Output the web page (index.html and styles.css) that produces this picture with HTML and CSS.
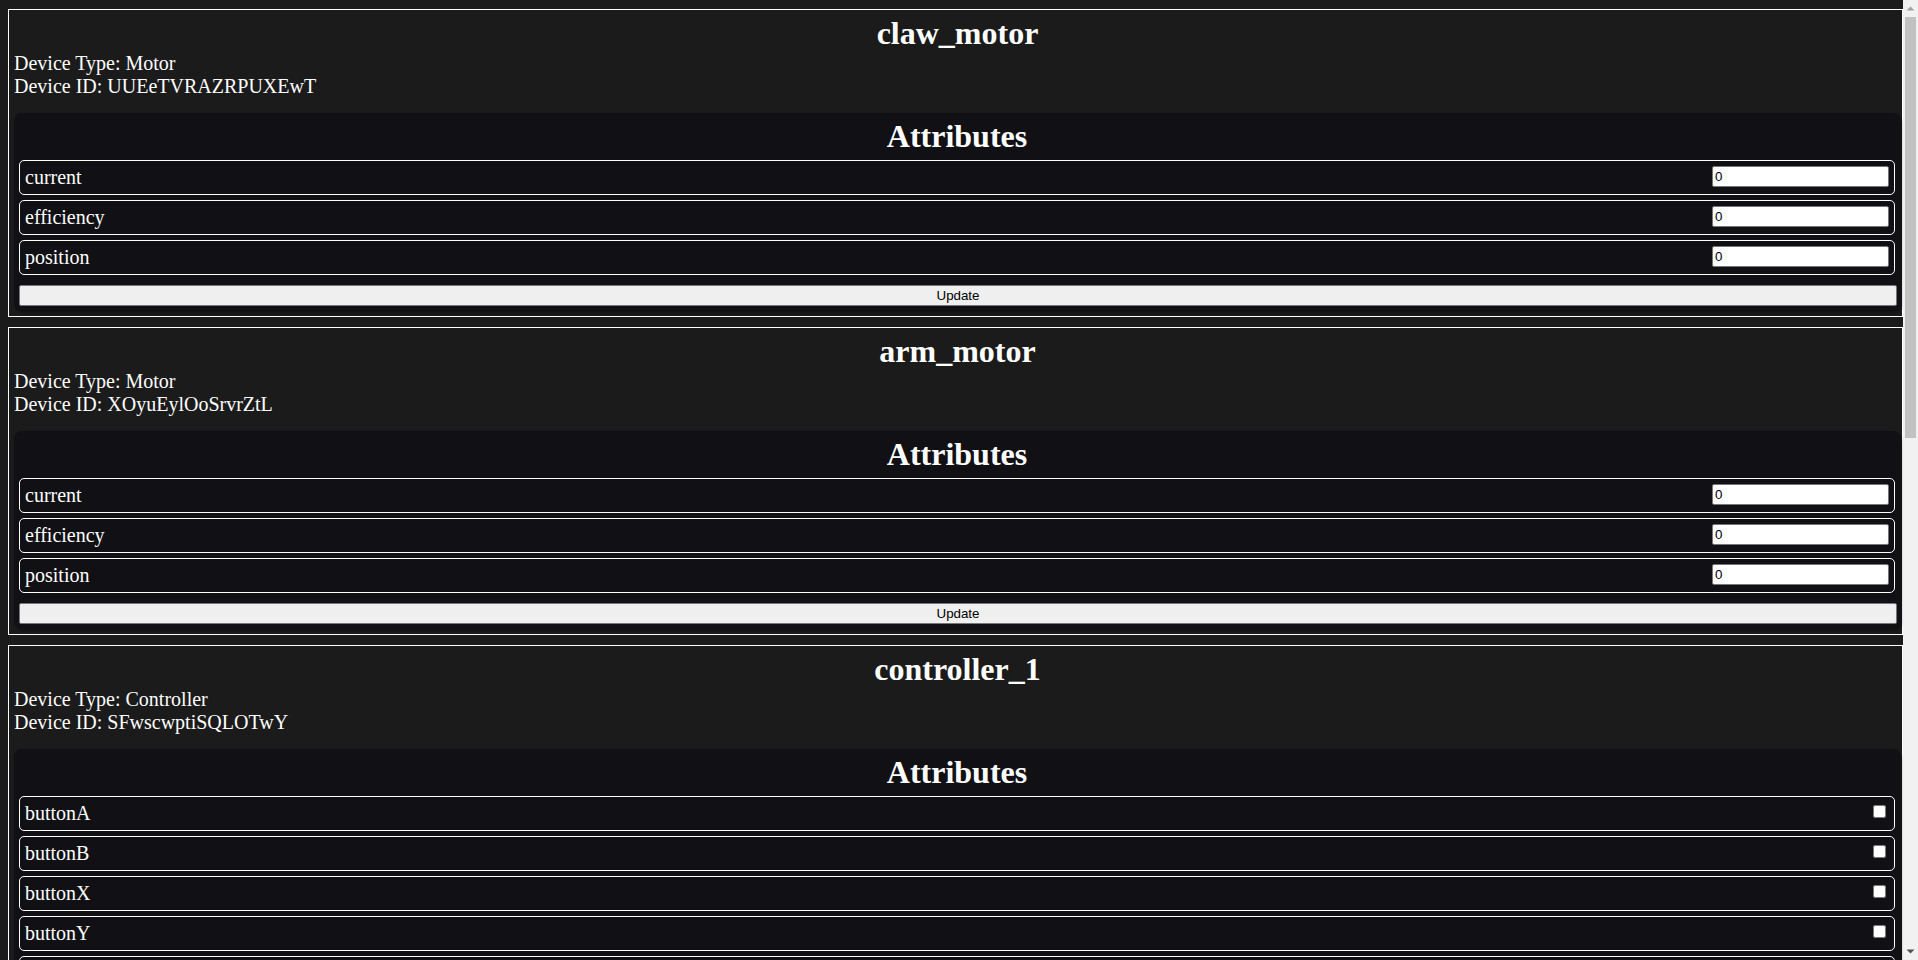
FILE: index.html
```html
<!DOCTYPE html>
<html>
<head>
<meta charset="utf-8">
<title>Devices</title>
<link rel="stylesheet" href="styles.css">
</head>
<body>
<div class="device">
  <h1 class="device-name">claw_motor</h1>
  <div class="device-meta">Device Type: Motor<br>Device ID: UUEeTVRAZRPUXEwT</div>
  <div class="attrs">
    <h1 class="attrs-title">Attributes</h1>
    <div class="attr"><span class="attr-name">current</span><input class="attr-num" type="text" value="0"></div>
    <div class="attr"><span class="attr-name">efficiency</span><input class="attr-num" type="text" value="0"></div>
    <div class="attr"><span class="attr-name">position</span><input class="attr-num" type="text" value="0"></div>
    <button class="update">Update</button>
  </div>
</div>
<div class="device">
  <h1 class="device-name">arm_motor</h1>
  <div class="device-meta">Device Type: Motor<br>Device ID: XOyuEylOoSrvrZtL</div>
  <div class="attrs">
    <h1 class="attrs-title">Attributes</h1>
    <div class="attr"><span class="attr-name">current</span><input class="attr-num" type="text" value="0"></div>
    <div class="attr"><span class="attr-name">efficiency</span><input class="attr-num" type="text" value="0"></div>
    <div class="attr"><span class="attr-name">position</span><input class="attr-num" type="text" value="0"></div>
    <button class="update">Update</button>
  </div>
</div>
<div class="device">
  <h1 class="device-name">controller_1</h1>
  <div class="device-meta">Device Type: Controller<br>Device ID: SFwscwptiSQLOTwY</div>
  <div class="attrs">
    <h1 class="attrs-title">Attributes</h1>
    <div class="attr"><span class="attr-name">buttonA</span><input class="attr-check" type="checkbox"></div>
    <div class="attr"><span class="attr-name">buttonB</span><input class="attr-check" type="checkbox"></div>
    <div class="attr"><span class="attr-name">buttonX</span><input class="attr-check" type="checkbox"></div>
    <div class="attr"><span class="attr-name">buttonY</span><input class="attr-check" type="checkbox"></div>
    <div class="attr"><span class="attr-name">buttonLB</span><input class="attr-check" type="checkbox"></div>
    <div class="attr"><span class="attr-name">buttonRB</span><input class="attr-check" type="checkbox"></div>
    <div class="attr"><span class="attr-name">buttonLS</span><input class="attr-check" type="checkbox"></div>
    <div class="attr"><span class="attr-name">buttonRS</span><input class="attr-check" type="checkbox"></div>
    <div class="attr"><span class="attr-name">buttonBack</span><input class="attr-check" type="checkbox"></div>
    <div class="attr"><span class="attr-name">buttonStart</span><input class="attr-check" type="checkbox"></div>
    <div class="attr"><span class="attr-name">buttonGuide</span><input class="attr-check" type="checkbox"></div>
    <div class="attr"><span class="attr-name">dpadUp</span><input class="attr-check" type="checkbox"></div>
    <div class="attr"><span class="attr-name">dpadDown</span><input class="attr-check" type="checkbox"></div>
    <div class="attr"><span class="attr-name">dpadLeft</span><input class="attr-check" type="checkbox"></div>
    <div class="attr"><span class="attr-name">dpadRight</span><input class="attr-check" type="checkbox"></div>
    <div class="attr"><span class="attr-name">leftTrigger</span><input class="attr-num" type="text" value="0"></div>
    <div class="attr"><span class="attr-name">rightTrigger</span><input class="attr-num" type="text" value="0"></div>
    <div class="attr"><span class="attr-name">leftStickX</span><input class="attr-num" type="text" value="0"></div>
    <div class="attr"><span class="attr-name">leftStickY</span><input class="attr-num" type="text" value="0"></div>
    <div class="attr"><span class="attr-name">rightStickX</span><input class="attr-num" type="text" value="0"></div>
    <div class="attr"><span class="attr-name">rightStickY</span><input class="attr-num" type="text" value="0"></div>
    <div class="attr"><span class="attr-name">rumbleLeft</span><input class="attr-num" type="text" value="0"></div>
    <div class="attr"><span class="attr-name">rumbleRight</span><input class="attr-num" type="text" value="0"></div>
    <div class="attr"><span class="attr-name">battery</span><input class="attr-num" type="text" value="0"></div>
    <div class="attr"><span class="attr-name">connected</span><input class="attr-check" type="checkbox"></div>
    <div class="attr"><span class="attr-name">player</span><input class="attr-num" type="text" value="0"></div>
    <div class="attr"><span class="attr-name">vibration</span><input class="attr-check" type="checkbox"></div>
    <div class="attr"><span class="attr-name">mode</span><input class="attr-num" type="text" value="0"></div>
    <div class="attr"><span class="attr-name">deadzone</span><input class="attr-num" type="text" value="0"></div>
    <div class="attr"><span class="attr-name">sensitivity</span><input class="attr-num" type="text" value="0"></div>
    <button class="update">Update</button>
  </div>
</div>
<div class="scrollbar" aria-hidden="true">
  <div class="sb-btn sb-up"><svg width="15" height="17" viewBox="0 0 15 17"><path d="M3.5 10.5 L7.5 6.5 L11.5 10.5 Z" fill="#a3a3a3"/></svg></div>
  <div class="sb-track"><div class="sb-thumb"></div></div>
  <div class="sb-btn sb-down"><svg width="15" height="17" viewBox="0 0 15 17"><path d="M3.5 6.5 L7.5 10.5 L11.5 6.5 Z" fill="#505050"/></svg></div>
</div>
</body>
</html>
```

FILE: styles.css
```css
html {
  background: #1b1b1b;
}

body {
  margin: 0 15px 0 0;
  padding: 9px 0 8px 8px;
  background: #1b1b1b;
  color: #ffffff;
  font-family: "Liberation Serif", "Times New Roman", serif;
  font-size: 20px;
}

.device {
  box-sizing: border-box;
  width: 100%;
  border: 1px solid #ffffff;
  padding: 5px 1px 5px 5px;
  margin-bottom: 10px;
  background: #1b1b1b;
}

.device-name {
  margin: 0;
  font-size: 32px;
  font-weight: bold;
  text-align: center;
}

.device-meta {
  margin: 0 0 15px 0;
}

.attrs {
  background: #111115;
  border-radius: 8px;
  padding: 5px 6px 5px 5px;
  box-shadow: 1px 2px 3px rgba(0, 0, 0, 0.35);
}

.attrs-title {
  margin: 0;
  font-size: 32px;
  font-weight: bold;
  text-align: center;
}

.attr {
  display: flex;
  justify-content: space-between;
  align-items: flex-start;
  border: 1px solid #ffffff;
  border-radius: 5px;
  padding: 5px;
  margin-top: 5px;
  line-height: 23px;
}

.attr-name {
  display: block;
}

.attr-num {
  box-sizing: border-box;
  width: 177px;
  height: 21px;
  margin: 0;
  padding: 1px 2px;
  border: 1px solid #767676;
  border-radius: 2px;
  background: #ffffff;
  color: #000000;
  font-family: "Liberation Sans", Arial, sans-serif;
  font-size: 13.33px;
}

.attr-check {
  width: 13px;
  height: 13px;
  margin: 3px 3px 3px 4px;
}

.update {
  display: block;
  box-sizing: border-box;
  width: calc(100% + 2px);
  height: 21px;
  margin: 10px 0 0 0;
  padding: 1px 6px;
  border: 1px solid #767676;
  border-radius: 2px;
  background: #efefef;
  color: #000000;
  font-family: "Liberation Sans", Arial, sans-serif;
  font-size: 13.33px;
}

.scrollbar {
  position: fixed;
  top: 0;
  right: 0;
  width: 15px;
  height: 100vh;
  display: flex;
  flex-direction: column;
  background: #f1f1f1;
}

.sb-btn {
  height: 17px;
  flex: none;
}

.sb-btn svg {
  display: block;
}

.sb-track {
  flex: 1;
  padding: 0 2px;
}

.sb-thumb {
  height: 421px;
  background: #c1c1c1;
}
```
